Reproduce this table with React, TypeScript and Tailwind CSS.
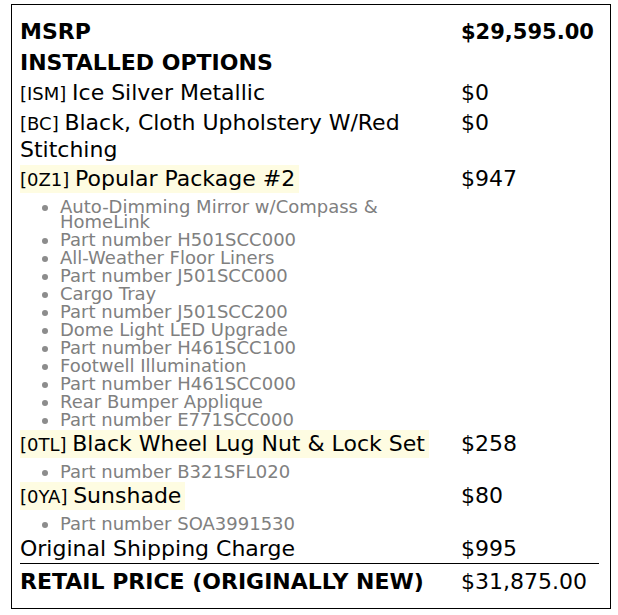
import React from 'react';

type SubList = string[];

interface OptionRow {
  code: string;
  name: string;
  price: string;
  highlight?: boolean;
  items?: SubList;
}

const options: OptionRow[] = [
  { code: 'ISM', name: 'Ice Silver Metallic', price: '$0' },
  { code: 'BC', name: 'Black, Cloth Upholstery W/Red Stitching', price: '$0' },
  {
    code: '0Z1',
    name: 'Popular Package #2',
    price: '$947',
    highlight: true,
    items: [
      'Auto-Dimming Mirror w/Compass & HomeLink',
      'Part number H501SCC000',
      'All-Weather Floor Liners',
      'Part number J501SCC000',
      'Cargo Tray',
      'Part number J501SCC200',
      'Dome Light LED Upgrade',
      'Part number H461SCC100',
      'Footwell Illumination',
      'Part number H461SCC000',
      'Rear Bumper Applique',
      'Part number E771SCC000',
    ],
  },
  {
    code: '0TL',
    name: 'Black Wheel Lug Nut & Lock Set',
    price: '$258',
    highlight: true,
    items: ['Part number B321SFL020'],
  },
  {
    code: '0YA',
    name: 'Sunshade',
    price: '$80',
    highlight: true,
    items: ['Part number SOA3991530'],
  },
];

const Details: React.FC<{ items: SubList }> = ({ items }) => (
  <ul className="w-[441px] list-disc pl-[40px] pt-[5px] pb-[2px] space-y-[3px] text-[18px] leading-[15px] text-[#808080] marker:text-[#8c8c8c]">
    {items.map((item) => (
      <li key={item}>{item}</li>
    ))}
  </ul>
);

const Option: React.FC<{ row: OptionRow }> = ({ row }) => {
  const label = (
    <>
      <span className="text-[18px] leading-none">[{row.code}] </span>
      {row.name}
    </>
  );

  return (
    <>
      {row.highlight ? (
        <div className="flex items-baseline py-[1px]">
          <div className="w-[441px] shrink-0">
            <span className="inline-block bg-[#fefce2] pr-[4px] leading-[28px]">{label}</span>
          </div>
          <div>{row.price}</div>
        </div>
      ) : (
        <div className="flex items-baseline py-[1.5px]">
          <div className="w-[441px] shrink-0">{label}</div>
          <div>{row.price}</div>
        </div>
      )}
      {row.items && <Details items={row.items} />}
    </>
  );
};

export default function App() {
  return (
    <div className="bg-white w-[618px] h-[615px] pt-[4px] pl-[11px] font-['DejaVu_Sans',sans-serif] text-black">
      <div className="w-[600px] h-[605px] border border-black pt-[11px] pl-[8px] pr-[11px] text-[22px] leading-[27px]">
        {/* header */}
        <div className="flex items-baseline py-[1.5px] font-bold">
          <div className="w-[441px] shrink-0">MSRP</div>
          <div className="text-[21px]">$29,595.00</div>
        </div>
        <div className="py-[1.5px] font-bold">INSTALLED OPTIONS</div>

        {options.map((row) => (
          <Option key={row.code} row={row} />
        ))}

        <div className="flex items-baseline pt-[1.5px] pb-[0.5px]">
          <div className="w-[441px] shrink-0">Original Shipping Charge</div>
          <div>$995</div>
        </div>

        {/* total */}
        <div className="mt-[1px] border-t border-black flex items-baseline pt-[4px] pb-[1.5px]">
          <div className="w-[441px] shrink-0 font-bold">RETAIL PRICE (ORIGINALLY NEW)</div>
          <div>$31,875.00</div>
        </div>
      </div>
    </div>
  );
}
